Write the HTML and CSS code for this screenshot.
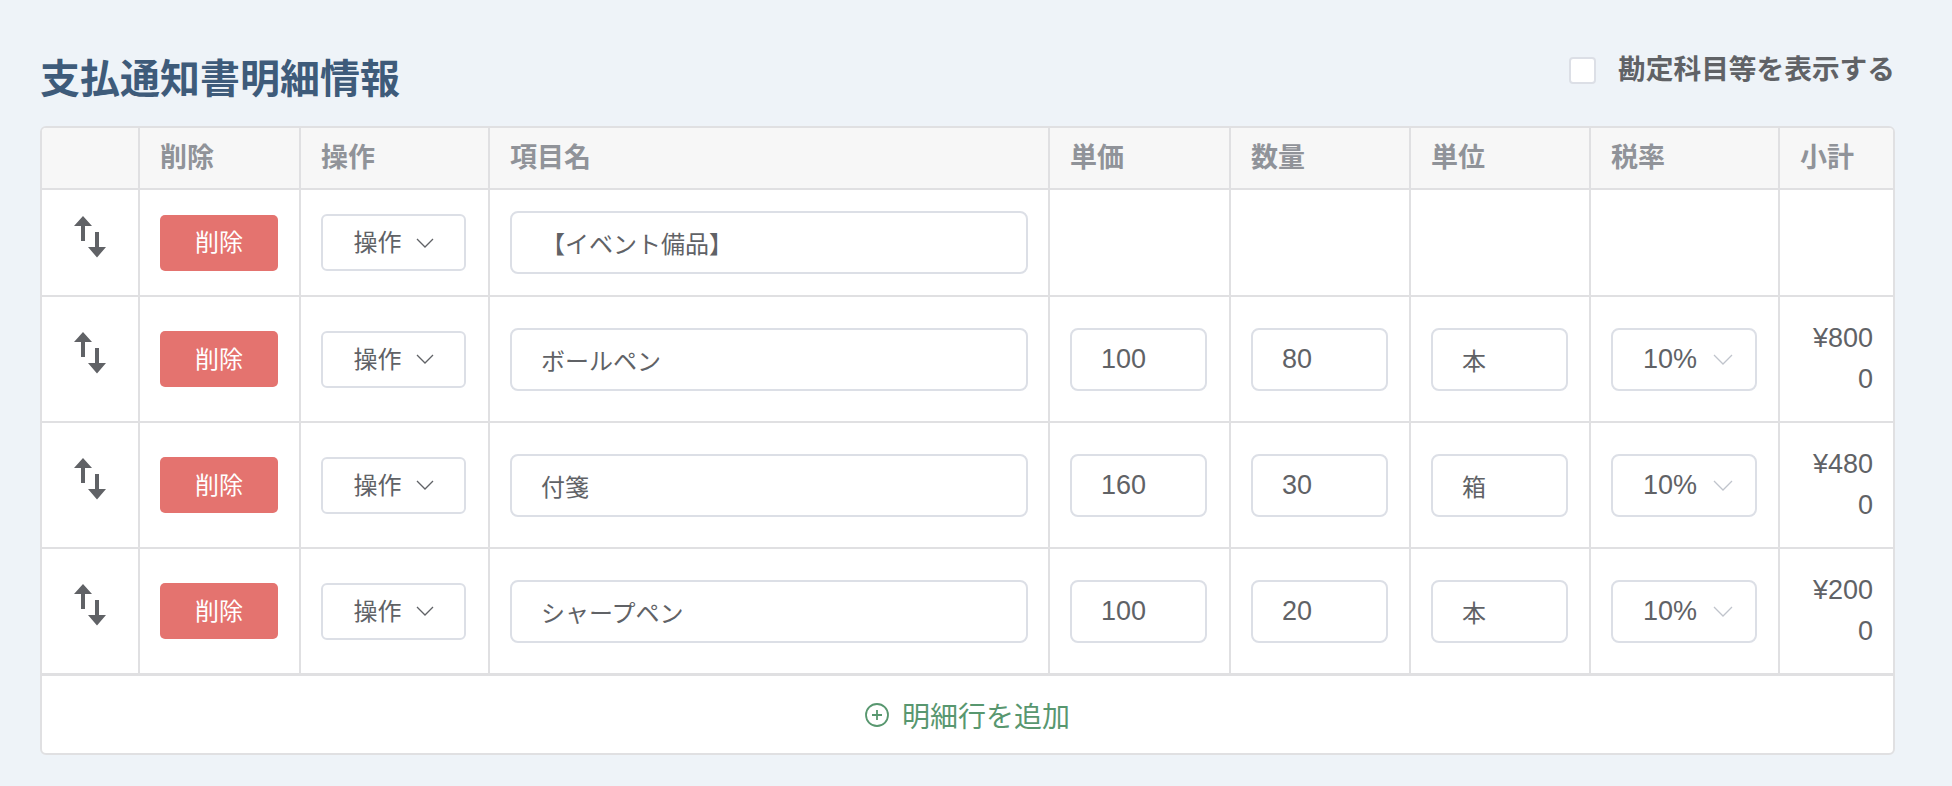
FILE: index.html
```html
<!DOCTYPE html>
<html lang="ja">
<head>
  <meta charset="UTF-8" />
  <title>支払通知書明細情報</title>
  <link rel="stylesheet" href="styles.css">
</head>
<body>
  <div class="page">
    <div class="head">
      <h2 class="title">支払通知書明細情報</h2>
      <label class="toggle"><span class="check"></span>勘定科目等を表示する</label>
    </div>

    <div class="panel">
      <table class="items">
        <colgroup>
          <col style="width: 96px">
          <col style="width: 161px">
          <col style="width: 189px">
          <col style="width: 560px">
          <col style="width: 181px">
          <col style="width: 180px">
          <col style="width: 180px">
          <col style="width: 189px">
          <col>
        </colgroup>
        <thead>
          <tr>
            <th></th>
            <th>削除</th>
            <th>操作</th>
            <th>項目名</th>
            <th>単価</th>
            <th>数量</th>
            <th>単位</th>
            <th>税率</th>
            <th>小計</th>
          </tr>
        </thead>
        <tbody>
          <tr>
            <td class="sort">
              <svg width="32" height="42" viewBox="0 0 32 42"><path d="M0 10L9 0L18 10H11V25H7V10Z"/><path d="M14 31H21V16H25V31H32L23 41.5Z"/></svg>
            </td>
            <td><button class="btn-delete">削除</button></td>
            <td>
              <button class="btn-op">操作<svg width="18" height="10" viewBox="0 0 18 10"><polyline points="1,1 9,9 17,1"/></svg></button>
            </td>
            <td><input class="field field-name" value="【イベント備品】"></td>
            <td></td>
            <td></td>
            <td></td>
            <td></td>
            <td></td>
          </tr>
          <tr>
            <td class="sort">
              <svg width="32" height="42" viewBox="0 0 32 42"><path d="M0 10L9 0L18 10H11V25H7V10Z"/><path d="M14 31H21V16H25V31H32L23 41.5Z"/></svg>
            </td>
            <td><button class="btn-delete">削除</button></td>
            <td>
              <button class="btn-op">操作<svg width="18" height="10" viewBox="0 0 18 10"><polyline points="1,1 9,9 17,1"/></svg></button>
            </td>
            <td><input class="field field-name" value="ボールペン"></td>
            <td><input class="field field-short field-num" value="100"></td>
            <td><input class="field field-short field-num" value="80"></td>
            <td><input class="field field-short" value="本"></td>
            <td>
              <div class="rate">10%<svg width="20" height="11" viewBox="0 0 20 11"><polyline points="1,1 10,10 19,1"/></svg></div>
            </td>
            <td class="sub">¥8000</td>
          </tr>
          <tr>
            <td class="sort">
              <svg width="32" height="42" viewBox="0 0 32 42"><path d="M0 10L9 0L18 10H11V25H7V10Z"/><path d="M14 31H21V16H25V31H32L23 41.5Z"/></svg>
            </td>
            <td><button class="btn-delete">削除</button></td>
            <td>
              <button class="btn-op">操作<svg width="18" height="10" viewBox="0 0 18 10"><polyline points="1,1 9,9 17,1"/></svg></button>
            </td>
            <td><input class="field field-name" value="付箋"></td>
            <td><input class="field field-short field-num" value="160"></td>
            <td><input class="field field-short field-num" value="30"></td>
            <td><input class="field field-short" value="箱"></td>
            <td>
              <div class="rate">10%<svg width="20" height="11" viewBox="0 0 20 11"><polyline points="1,1 10,10 19,1"/></svg></div>
            </td>
            <td class="sub">¥4800</td>
          </tr>
          <tr>
            <td class="sort">
              <svg width="32" height="42" viewBox="0 0 32 42"><path d="M0 10L9 0L18 10H11V25H7V10Z"/><path d="M14 31H21V16H25V31H32L23 41.5Z"/></svg>
            </td>
            <td><button class="btn-delete">削除</button></td>
            <td>
              <button class="btn-op">操作<svg width="18" height="10" viewBox="0 0 18 10"><polyline points="1,1 9,9 17,1"/></svg></button>
            </td>
            <td><input class="field field-name" value="シャープペン"></td>
            <td><input class="field field-short field-num" value="100"></td>
            <td><input class="field field-short field-num" value="20"></td>
            <td><input class="field field-short" value="本"></td>
            <td>
              <div class="rate">10%<svg width="20" height="11" viewBox="0 0 20 11"><polyline points="1,1 10,10 19,1"/></svg></div>
            </td>
            <td class="sub">¥2000</td>
          </tr>
        </tbody>
      </table>

      <div class="add-row">
        <svg width="24" height="24" viewBox="0 0 24 24"><circle cx="12" cy="12" r="11"/><path d="M12 7V17M7 12H17"/></svg>
        明細行を追加
      </div>
    </div>
  </div>
</body>
</html>
```

FILE: styles.css
```css
:root {
  --page-bg: #eef3f8;
  --title: #3e5b7a;
  --line: #e0e0e2;
  --field-line: #dcdfe6;
  --text: #606266;
  --muted: #909399;
  --head-bg: #f7f7f7;
  --danger: #e4736f;
  --arrow-light: #c0c4cc;
  --green: #58976f;
}

/* Page */
body {
  margin: 0;
  background: var(--page-bg);
  font-family: "Liberation Sans", "Noto Sans CJK JP", sans-serif;
  color: var(--text);
}

.page {
  padding: 52px 57px 0 40px;
}

.head {
  display: flex;
  justify-content: space-between;
  align-items: flex-start;
}

.title {
  margin: 3px 0 0;
  font-size: 40px;
  line-height: 48px;
  font-weight: 700;
  color: var(--title);
}

.toggle {
  display: flex;
  align-items: center;
  gap: 22px;
  font-size: 27.7px;
  line-height: 36px;
  font-weight: 600;
  cursor: pointer;
}

.check {
  width: 27px;
  height: 27px;
  box-sizing: border-box;
  border: 2px solid var(--field-line);
  border-radius: 4px;
  background: #fff;
}

/* Table */
.panel {
  margin-top: 23px;
  background: #fff;
  border: 2px solid var(--line);
  border-radius: 6px;
  overflow: hidden;
}

.items {
  width: 100%;
  table-layout: fixed;
  border-collapse: separate;
  border-spacing: 0;
}

.items th,
.items td {
  border-left: 2px solid var(--line);
  border-bottom: 2px solid var(--line);
}
.items th:first-child,
.items td:first-child {
  border-left: none;
}

.items th {
  padding: 0 20px;
  background: var(--head-bg);
  color: var(--muted);
  font-size: 27px;
  font-weight: 700;
  line-height: 60px;
  text-align: left;
}

.items td {
  padding: 21px 20px;
  font-size: 24px;
  line-height: 41px;
  vertical-align: middle;
}

.items td.sort {
  padding: 21px 0;
}
.sort svg {
  display: block;
  margin: -12px auto 0;
  fill: var(--text);
}

/* subtotal wraps inside the narrow column, like the original */
.items td.sub {
  padding-left: 27px;
  font-size: 27px;
  text-align: right;
  word-break: break-all;
}

/* Controls */
.btn-delete {
  display: block;
  width: 118px;
  height: 56px;
  padding: 0;
  border: none;
  border-radius: 5px;
  background: var(--danger);
  color: #fff;
  font: inherit;
  font-size: 24px;
  cursor: pointer;
}

.btn-op {
  display: flex;
  align-items: center;
  justify-content: center;
  gap: 14px;
  width: 145px;
  height: 57px;
  padding: 0;
  border: 2px solid var(--field-line);
  border-radius: 6px;
  background: #fff;
  color: var(--text);
  font: inherit;
  font-size: 24px;
  cursor: pointer;
}
.btn-op svg {
  fill: none;
  stroke: var(--text);
  stroke-width: 1.3;
}

.field {
  display: block;
  box-sizing: border-box;
  height: 63px;
  padding: 0 29px;
  border: 2px solid var(--field-line);
  border-radius: 8px;
  background: #fff;
  color: var(--text);
  font: inherit;
  font-size: 24px;
  outline: none;
}
.field-name {
  width: 518px;
}
.field-short {
  width: 137px;
}
.field-num {
  font-size: 27px;
}

.rate {
  display: flex;
  align-items: center;
  justify-content: space-between;
  box-sizing: border-box;
  width: 146px;
  height: 63px;
  padding: 0 22px 0 30px;
  border: 2px solid var(--field-line);
  border-radius: 8px;
  background: #fff;
  font-size: 27px;
  cursor: pointer;
}
.rate svg {
  fill: none;
  stroke: var(--arrow-light);
  stroke-width: 1.3;
}

/* Footer */
.add-row {
  display: flex;
  align-items: center;
  justify-content: center;
  gap: 13px;
  height: 77px;
  border-top: 1px solid var(--line);
  color: var(--green);
  font-size: 28px;
  cursor: pointer;
}
.add-row svg {
  fill: none;
  stroke: var(--green);
  stroke-width: 1.8;
}
```
